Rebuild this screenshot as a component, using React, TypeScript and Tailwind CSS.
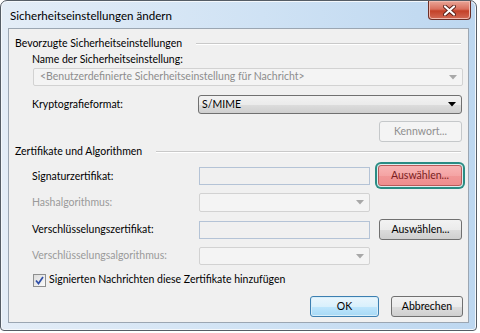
import React from "react";

const font = { fontFamily: 'Lato, "Noto Sans", sans-serif' };

function Arrow({ disabled }: { disabled?: boolean }) {
  return (
    <svg width="8" height="5" viewBox="0 0 8 5" className="shrink-0">
      <path d="M0 0 H8 L4 4.5 Z" fill={disabled ? "#a8a8a8" : "#000"} />
    </svg>
  );
}

function DisabledCombo({ text, className }: { text?: string; className: string }) {
  return (
    <div
      className={`flex items-center justify-between rounded-[2px] border border-[#d2d2d2] bg-[#f4f4f4] pl-[6px] pr-[5px] ${className}`}
    >
      <span className="truncate text-[#8d8d8d]">{text}</span>
      <Arrow disabled />
    </div>
  );
}

function Field() {
  return <div className="h-[18px] w-[171px] border border-[#b4c3d6] bg-[#f0f0f0]" />;
}

function Btn({
  children,
  disabled,
  variant,
  className = "",
}: {
  children: React.ReactNode;
  disabled?: boolean;
  variant?: "hot" | "default";
  className?: string;
}) {
  let look =
    "border-[#707070] bg-[linear-gradient(#f2f2f2_0%,#ebebeb_50%,#dddddd_51%,#cfcfcf_100%)] text-black";
  if (disabled) look = "border-[#c5c8ca] bg-[#f4f4f4] text-[#8f8f8f]";
  if (variant === "hot")
    look =
      "border-[#b85a5a] bg-[linear-gradient(#f8b4b4_0%,#f4a4a4_50%,#f19696_51%,#ee8f8f_100%)] text-[#7a1e1e] shadow-[0_0_0_1px_#dfeeee,0_0_0_3px_#2a8c84]";
  if (variant === "default")
    look =
      "border-[#3c7fb1] bg-[linear-gradient(#eaf6fd_0%,#d9f0fc_50%,#bee6fd_51%,#a7d9f5_100%)] text-black shadow-[inset_0_0_0_1px_#d8eef9]";
  return (
    <div
      className={`flex h-[21px] items-center justify-center rounded-[3px] border ${look} ${className}`}
    >
      {children}
    </div>
  );
}

function GroupHeader({ title }: { title: string }) {
  return (
    <div className="flex h-[16px] items-center pl-[6px] pr-[7px]">
      <span className="whitespace-nowrap">{title}</span>
      <div className="ml-[14px] h-[2px] flex-1 border-t border-b border-t-[#c9c9c9] border-b-white" />
    </div>
  );
}

export default function App() {
  return (
    <div className="h-[333px] w-[480px] bg-white text-[10.5px] text-black" style={font}>
      <div className="flex h-[331px] w-[477px] flex-col rounded-t-[7px] rounded-b-[4px] border border-[#555d66] bg-[linear-gradient(90deg,#e4edf7_0%,#cfe2f4_55%,#bdd7f0_100%)] shadow-[inset_0_0_0_1px_#f4f8fc]">
        {/* title bar */}
        <div className="flex h-[27px] shrink-0 items-start justify-between">
          <div className="pl-[9px] pt-[7px] text-[11.6px] leading-[16px] text-[#000]">
            Sicherheitseinstellungen ändern
          </div>
          <div className="mr-[5px] flex h-[19px] w-[43px] items-center justify-center rounded-b-[4px] border border-t-0 border-[#6d2f27] bg-[linear-gradient(#e9a597_0%,#d9705e_45%,#c44128_55%,#d26a56_100%)] shadow-[inset_0_0_0_1px_#f1b8ad]">
            <svg width="13" height="11" viewBox="0 0 13 11">
              <path
                d="M2 1.5 L11 9.5 M11 1.5 L2 9.5"
                stroke="#5a2019"
                strokeWidth="4"
                strokeLinecap="round"
              />
              <path
                d="M2 1.5 L11 9.5 M11 1.5 L2 9.5"
                stroke="#fff"
                strokeWidth="2.2"
                strokeLinecap="round"
              />
            </svg>
          </div>
        </div>

        {/* client */}
        <div className="mx-[7px] mb-[7px] flex flex-1 flex-col border border-[#9ba6b2] bg-[#f0f0f0] pt-[7px]">
          <GroupHeader title="Bevorzugte Sicherheitseinstellungen" />
          <div className="flex h-[16px] items-center pl-[23px]">Name der Sicherheitseinstellung:</div>
          <div className="pl-[24px] pr-[5px]">
            <DisabledCombo
              className="h-[18px]"
              text="<Benutzerdefinierte Sicherheitseinstellung für Nachricht>"
            />
          </div>

          <div className="mt-[9px] flex h-[19px] items-center pl-[23px] pr-[6px]">
            <span className="w-[166px]">Kryptografieformat:</span>
            <div className="flex h-[19px] flex-1 items-center justify-between rounded-[3px] border border-[#707070] bg-[linear-gradient(#f2f2f2_0%,#ebebeb_50%,#dddddd_51%,#cfcfcf_100%)] pl-[3px] pr-[5px]">
              <span>S/MIME</span>
              <Arrow />
            </div>
          </div>

          <div className="mt-[7px] flex justify-end pr-[6px]">
            <Btn disabled className="w-[83px]">
              Kennwort...
            </Btn>
          </div>

          <div className="mt-[2px]">
            <GroupHeader title="Zertifikate und Algorithmen" />
          </div>

          <div className="mt-[3px] flex h-[25px] items-center pl-[23px] pr-[6px]">
            <span className="w-[167px] pt-[2px]">Signaturzertifikat:</span>
            <Field />
            <div className="flex-1" />
            <Btn variant="hot" className="w-[84px]">
              Auswählen...
            </Btn>
          </div>

          <div className="mt-[5px] flex h-[19px] items-center pl-[23px]">
            <span className="w-[167px] text-[#9a9a9a]">Hashalgorithmus:</span>
            <DisabledCombo className="h-[19px] w-[171px]" />
          </div>

          <div className="mt-[7px] flex h-[21px] items-center pl-[23px] pr-[6px]">
            <span className="w-[167px]">Verschlüsselungszertifikat:</span>
            <Field />
            <div className="flex-1" />
            <Btn className="w-[83px]">Auswählen...</Btn>
          </div>

          <div className="mt-[7px] flex h-[18px] items-center pl-[23px]">
            <span className="w-[167px] text-[#9a9a9a]">Verschlüsselungsalgorithmus:</span>
            <DisabledCombo className="h-[18px] w-[171px]" />
          </div>

          <div className="mt-[7px] flex h-[16px] items-center pl-[24px]">
            <div className="flex h-[13px] w-[13px] items-center justify-center border border-[#8e8f8f] bg-[linear-gradient(135deg,#dcdcdc,#fbfbfb)]">
              <svg width="9" height="9" viewBox="0 0 9 9">
                <path d="M1 4.5 L3.5 7.5 L8 1" fill="none" stroke="#2f4fa8" strokeWidth="1.7" />
              </svg>
            </div>
            <span className="ml-[3px]">Signierten Nachrichten diese Zertifikate hinzufügen</span>
          </div>

          <div className="mt-[8px] flex justify-end gap-[12px] pr-[5px]">
            <Btn variant="default" className="w-[69px]">
              OK
            </Btn>
            <Btn className="w-[72px]">Abbrechen</Btn>
          </div>
        </div>
      </div>
    </div>
  );
}
